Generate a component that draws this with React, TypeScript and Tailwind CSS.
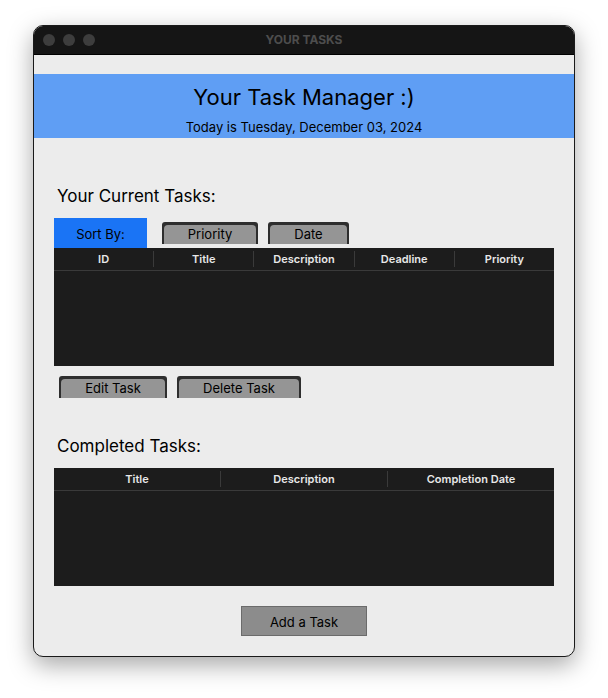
import React from "react";

const font = { fontFamily: "Inter, 'Noto Sans', sans-serif" };

const TkButton = ({ label, w }: { label: string; w: string }) => (
  <div className={`${w} h-[22px] bg-[#2e2e2e] px-[2px] pt-[3px] rounded-t-[3px]`}>
    <div className="h-full bg-[#959595] rounded-t-[4px] flex items-center justify-center text-[13px] text-black pt-[1px]">
      {label}
    </div>
  </div>
);

const Table = ({ cols, height }: { cols: string[]; height: string }) => (
  <div className={`w-[500px] ${height} bg-[#1c1c1c] flex flex-col`}>
    <div className="h-[23px] flex border-b border-[#3a3a3a]">
      {cols.map((c, i) => (
        <div
          key={c}
          className={`flex-1 flex items-center justify-center text-[11px] font-semibold text-[#e8e8e8] ${
            i < cols.length - 1 ? "border-r border-[#3a3a3a] my-[3px]" : ""
          }`}
        >
          {c}
        </div>
      ))}
    </div>
  </div>
);

export default function App() {
  return (
    <div className="w-[608px] h-[698px] bg-white pt-[25px] pl-[33px]" style={font}>
      <div className="w-[542px] h-[632px] rounded-[10px] bg-[#ececec] border border-[#1a1a1a] overflow-hidden shadow-[0_8px_24px_rgba(0,0,0,0.35)] flex flex-col">
        {/* title bar */}
        <div className="h-[29px] bg-[#151515] flex items-center px-[9px] relative border-b border-black">
          <div className="flex gap-[8px]">
            <span className="w-[12px] h-[12px] rounded-full bg-[#3d3d3d]" />
            <span className="w-[12px] h-[12px] rounded-full bg-[#3d3d3d]" />
            <span className="w-[12px] h-[12px] rounded-full bg-[#3d3d3d]" />
          </div>
          <div className="absolute inset-0 flex items-center justify-center text-[12px] font-bold text-[#4d4d4d]">
            YOUR TASKS
          </div>
        </div>

        <div className="h-[19px]" />
        {/* header */}
        <div className="h-[64px] bg-[#5f9ef4] flex flex-col items-center text-black">
          <div className="text-[22px] mt-[9px] leading-[28px]">Your Task Manager :)</div>
          <div className="text-[13px] mt-[8px] leading-[16px]">Today is Tuesday, December 03, 2024</div>
        </div>

        <div className="pl-[20px] flex flex-col">
          <div className="text-[17px] text-black mt-[46px] ml-[3px] leading-[24px]">Your Current Tasks:</div>
          <div className="flex items-end mt-[10px]">
            <div className="w-[93px] h-[30px] bg-[#1a74f5] flex items-center justify-center text-[13px] text-black pt-[3px]">
              Sort By:
            </div>
            <div className="ml-[15px] mb-[4px]">
              <TkButton label="Priority" w="w-[96px]" />
            </div>
            <div className="ml-[10px] mb-[4px]">
              <TkButton label="Date" w="w-[81px]" />
            </div>
          </div>
          <Table cols={["ID", "Title", "Description", "Deadline", "Priority"]} height="h-[118px]" />
          <div className="flex gap-[10px] mt-[10px] ml-[5px]">
            <TkButton label="Edit Task" w="w-[108px]" />
            <TkButton label="Delete Task" w="w-[124px]" />
          </div>
          <div className="text-[17px] text-black mt-[36px] ml-[3px] leading-[24px]">Completed Tasks:</div>
          <div className="mt-[10px]">
            <Table cols={["Title", "Description", "Completion Date"]} height="h-[118px]" />
          </div>
          <div className="w-[500px] flex justify-center mt-[20px]">
            <div className="w-[126px] h-[30px] bg-[#8c8c8c] border border-[#6b6b6b] flex items-center justify-center text-[13px] text-black pt-[3px]">
              Add a Task
            </div>
          </div>
        </div>
      </div>
    </div>
  );
}
